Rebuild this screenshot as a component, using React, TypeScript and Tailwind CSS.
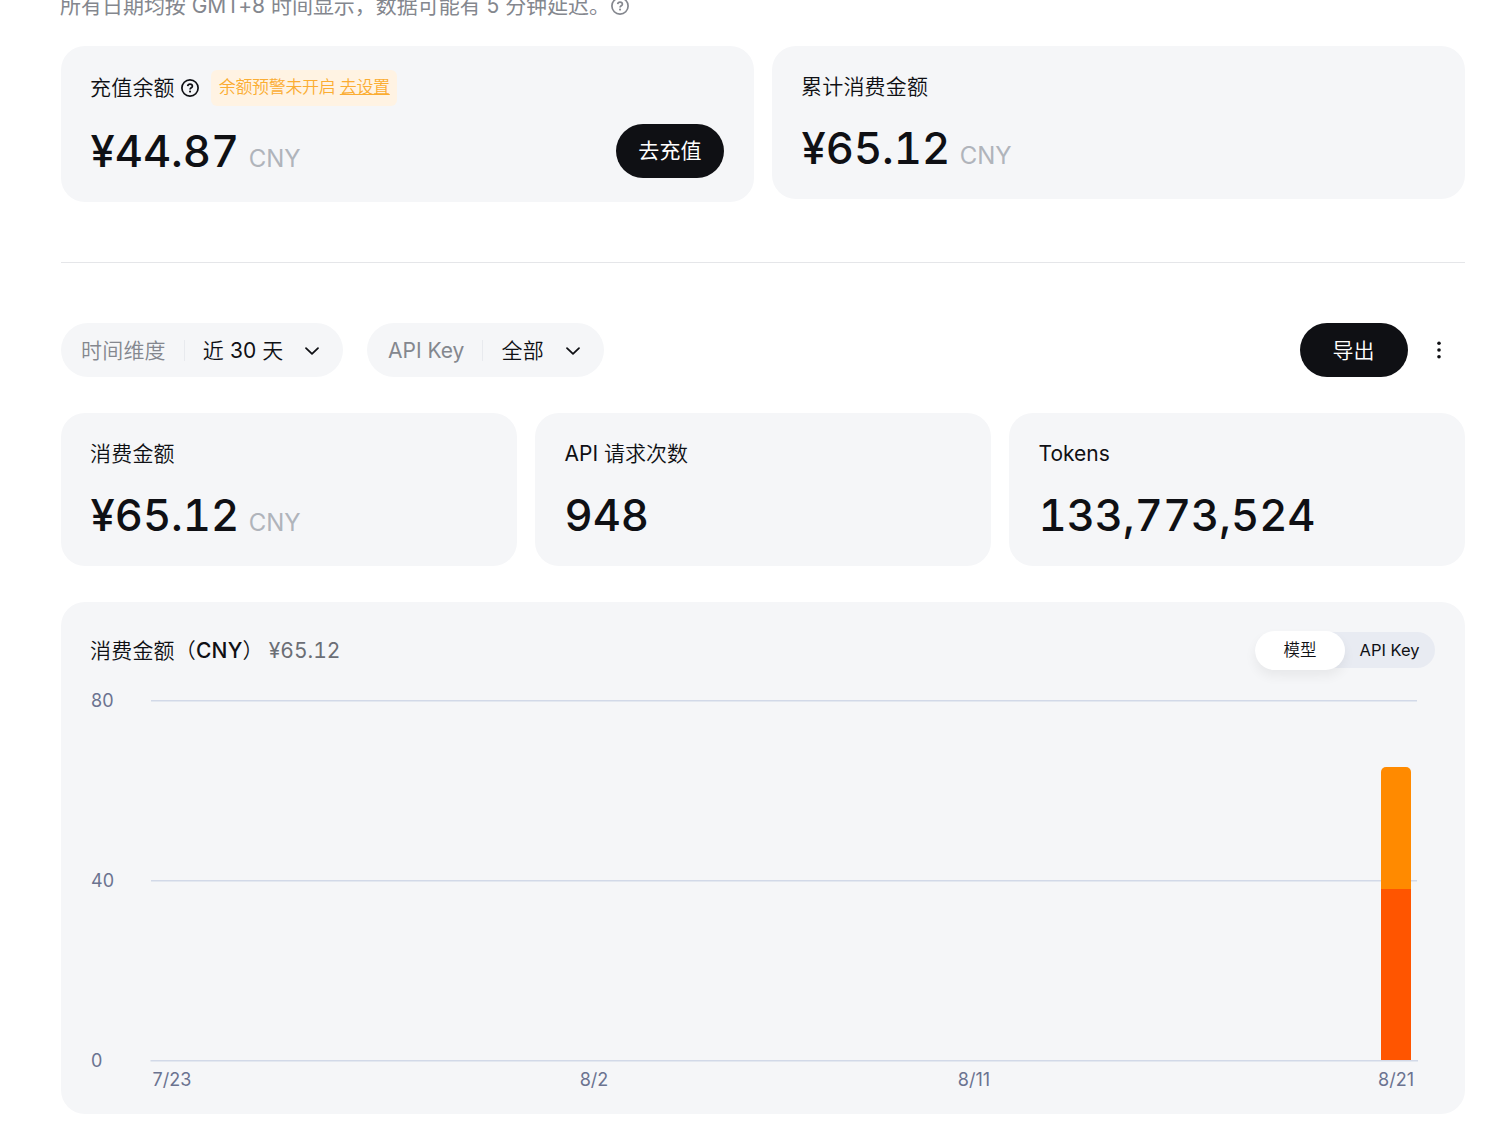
import type { ReactNode } from "react";

function HelpIcon({ className }: { className: string }) {
  return (
    <svg viewBox="0 0 20 20" className={className} fill="none" stroke="currentColor" strokeWidth="1.7">
      <circle cx="10" cy="10" r="8.1" />
      <path d="M7.7 8.1A2.35 2.35 0 0 1 10 6.1c1.4 0 2.4.85 2.4 2.05 0 1.55-2.35 1.75-2.35 3.35" />
      <circle cx="10.05" cy="13.6" r="1.05" fill="currentColor" stroke="none" />
    </svg>
  );
}

function Chevron() {
  return (
    <svg viewBox="0 0 18 18" className="h-[18px] w-[18px]" fill="none" stroke="#0f1014" strokeWidth="1.8" strokeLinecap="round" strokeLinejoin="round">
      <path d="M3 6.2 9 11.9 15 6.2" />
    </svg>
  );
}

function Amount({ value, unit }: { value: string; unit?: string }) {
  return (
    <div className="flex h-[60px] items-baseline pl-[0.5px] text-[43.5px] leading-[60px] font-medium tabular-nums">
      <span>{value}</span>
      {unit && <span className="ml-[9.5px] text-[24px] font-normal text-[#b0b4bb]">{unit}</span>}
    </div>
  );
}

function StatCard({ title, value, unit }: { title: ReactNode; value: string; unit?: string }) {
  return (
    <div className="h-[153px] rounded-[24px] bg-[#f5f6f8] px-[29px] pt-[26px]">
      <div className="h-[30px] text-[21px] leading-[30px]">{title}</div>
      <div className="mt-[16px]">
        <Amount value={value} unit={unit} />
      </div>
    </div>
  );
}

function Filter({ label, value, className }: { label: ReactNode; value: ReactNode; className: string }) {
  return (
    <button className={`flex h-[54px] items-center rounded-full bg-[#f5f6f8] pt-px text-[21px] ${className}`}>
      <span className="text-[#84878e]">{label}</span>
      <span className="mx-[18px] h-[21px] w-px bg-[#e8eaee]" />
      {value}
      <span className="ml-[19.5px]">
        <Chevron />
      </span>
    </button>
  );
}

function Chart() {
  return (
    <svg viewBox="0 0 1344 412" className="block h-[412px] w-[1344px]" fontSize="18" fill="#6b7390">
      <rect x="60" y="15" width="1266" height="1.5" fill="#d2d9e8" />
      <rect x="60" y="195" width="1266" height="1.5" fill="#d2d9e8" />
      <path d="M1290 204V87a5 5 0 0 1 5-5h20a5 5 0 0 1 5 5v117z" fill="#ff8a00" />
      <rect x="1290" y="204" width="30" height="171" fill="#ff5500" />
      <rect x="59.5" y="375" width="1267.5" height="1.5" fill="#d2d9e8" />
      <text x="0" y="22">80</text>
      <text x="0" y="202">40</text>
      <text x="0" y="382">0</text>
      <text x="81" y="401" textAnchor="middle">7/23</text>
      <text x="503" y="401" textAnchor="middle">8/2</text>
      <text x="883" y="401" textAnchor="middle">8/11</text>
      <text x="1305" y="401" textAnchor="middle">8/21</text>
    </svg>
  );
}

export default function App() {
  return (
    <div className="h-[1138px] w-[1510px] overflow-hidden bg-white pr-[45px] pl-[61px] font-['Inter','Noto_Sans_CJK_SC',sans-serif] text-[#0f1014]">
      <div className="-mt-[9px] -ml-px flex h-[30px] items-center text-[21px] leading-[30px] tracking-[-0.03px] whitespace-nowrap text-[#84878e]">
        <span>所有日期均按 GMT+8 时间显示，数据可能有 5 分钟延迟。</span>
        <HelpIcon className="h-5 w-5" />
      </div>

      <div className="mt-[25px] grid grid-cols-2 items-start gap-[18px]">
        <div className="h-[156px] rounded-[24px] bg-[#f5f6f8] pt-[24px] pr-[30px] pl-[29px]">
          <div className="flex h-[36px] items-center text-[21px]">
            <span className="font-[350] tracking-[0.2px]">充值余额</span>
            <HelpIcon className="ml-[5px] h-5 w-5" />
            <span className="ml-[11px] flex h-[36px] w-[186px] items-center rounded-[6px] bg-[#fff3e3] px-[8px] text-[17px] font-[350] tracking-[-0.35px] whitespace-pre text-[#fbad32]">
              余额预警未开启 <a className="underline">去设置</a>
            </span>
          </div>
          <div className="mt-[15px] flex items-center justify-between">
            <Amount value="¥44.87" unit="CNY" />
            <button className="h-[54px] w-[108px] rounded-full bg-[#0f1014] text-[21px] tracking-[0.2px] text-white">去充值</button>
          </div>
        </div>
        <StatCard title={<span className="font-[350] tracking-[0.2px]">累计消费金额</span>} value="¥65.12" unit="CNY" />
      </div>

      <div className="mt-[60px] h-px bg-[#e5e6e9]" />

      <div className="mt-[60px] flex h-[54px] items-center">
        <Filter
          label={<span className="font-[350] tracking-[0.2px]">时间维度</span>}
          value={
            <span className="tracking-[0.1px]">
              <span className="font-[350]">近</span> 30 <span className="font-[350]">天</span>
            </span>
          }
          className="w-[282px] pl-[20px]"
        />
        <Filter label="API Key" value={<span className="font-[350] tracking-[0.5px]">全部</span>} className="ml-[24px] w-[237px] pl-[21px]" />
        <button className="ml-auto h-[54px] w-[108px] rounded-full bg-[#0f1014] pt-px pr-px text-[21px] font-[350] text-white">导出</button>
        <svg viewBox="0 0 20 20" className="mr-[16px] ml-[21px] h-5 w-5" fill="#0f1014">
          <circle cx="10" cy="3.2" r="1.8" />
          <circle cx="10" cy="10" r="1.8" />
          <circle cx="10" cy="16.8" r="1.8" />
        </svg>
      </div>

      <div className="mt-[36px] grid grid-cols-3 gap-[18px]">
        <StatCard title={<span className="font-[350] tracking-[0.2px]">消费金额</span>} value="¥65.12" unit="CNY" />
        <StatCard
          title={
            <span className="pl-[0.5px]">
              API <span className="font-[350]">请求次数</span>
            </span>
          }
          value="948"
        />
        <StatCard title={<span className="pl-[0.5px]">Tokens</span>} value="133,773,524" />
      </div>

      <div className="mt-[36px] h-[511.5px] rounded-[24px] bg-[#f5f6f8] px-[30px] pt-[29px]">
        <div className="-ml-px flex h-[39px] items-center text-[21px]">
          <span className="font-[350] tracking-[0.2px]">
            消费金额（<span className="font-medium">CNY</span>）
          </span>
          <span className="ml-[5px] tabular-nums text-[#6b6e75]">¥65.12</span>
          <div className="mt-[-1px] ml-auto flex h-[36px] w-[180px] items-center rounded-full bg-[#e8ebf2] text-[16.5px]">
            <span className="flex h-[39px] w-[90px] items-center justify-center rounded-full bg-white font-[350] shadow-[0_6px_12px_rgba(15,16,20,0.06)]">模型</span>
            <span className="flex-1 pr-px text-center">API Key</span>
          </div>
        </div>
        <div className="mt-[15px]">
          <Chart />
        </div>
      </div>
    </div>
  );
}
